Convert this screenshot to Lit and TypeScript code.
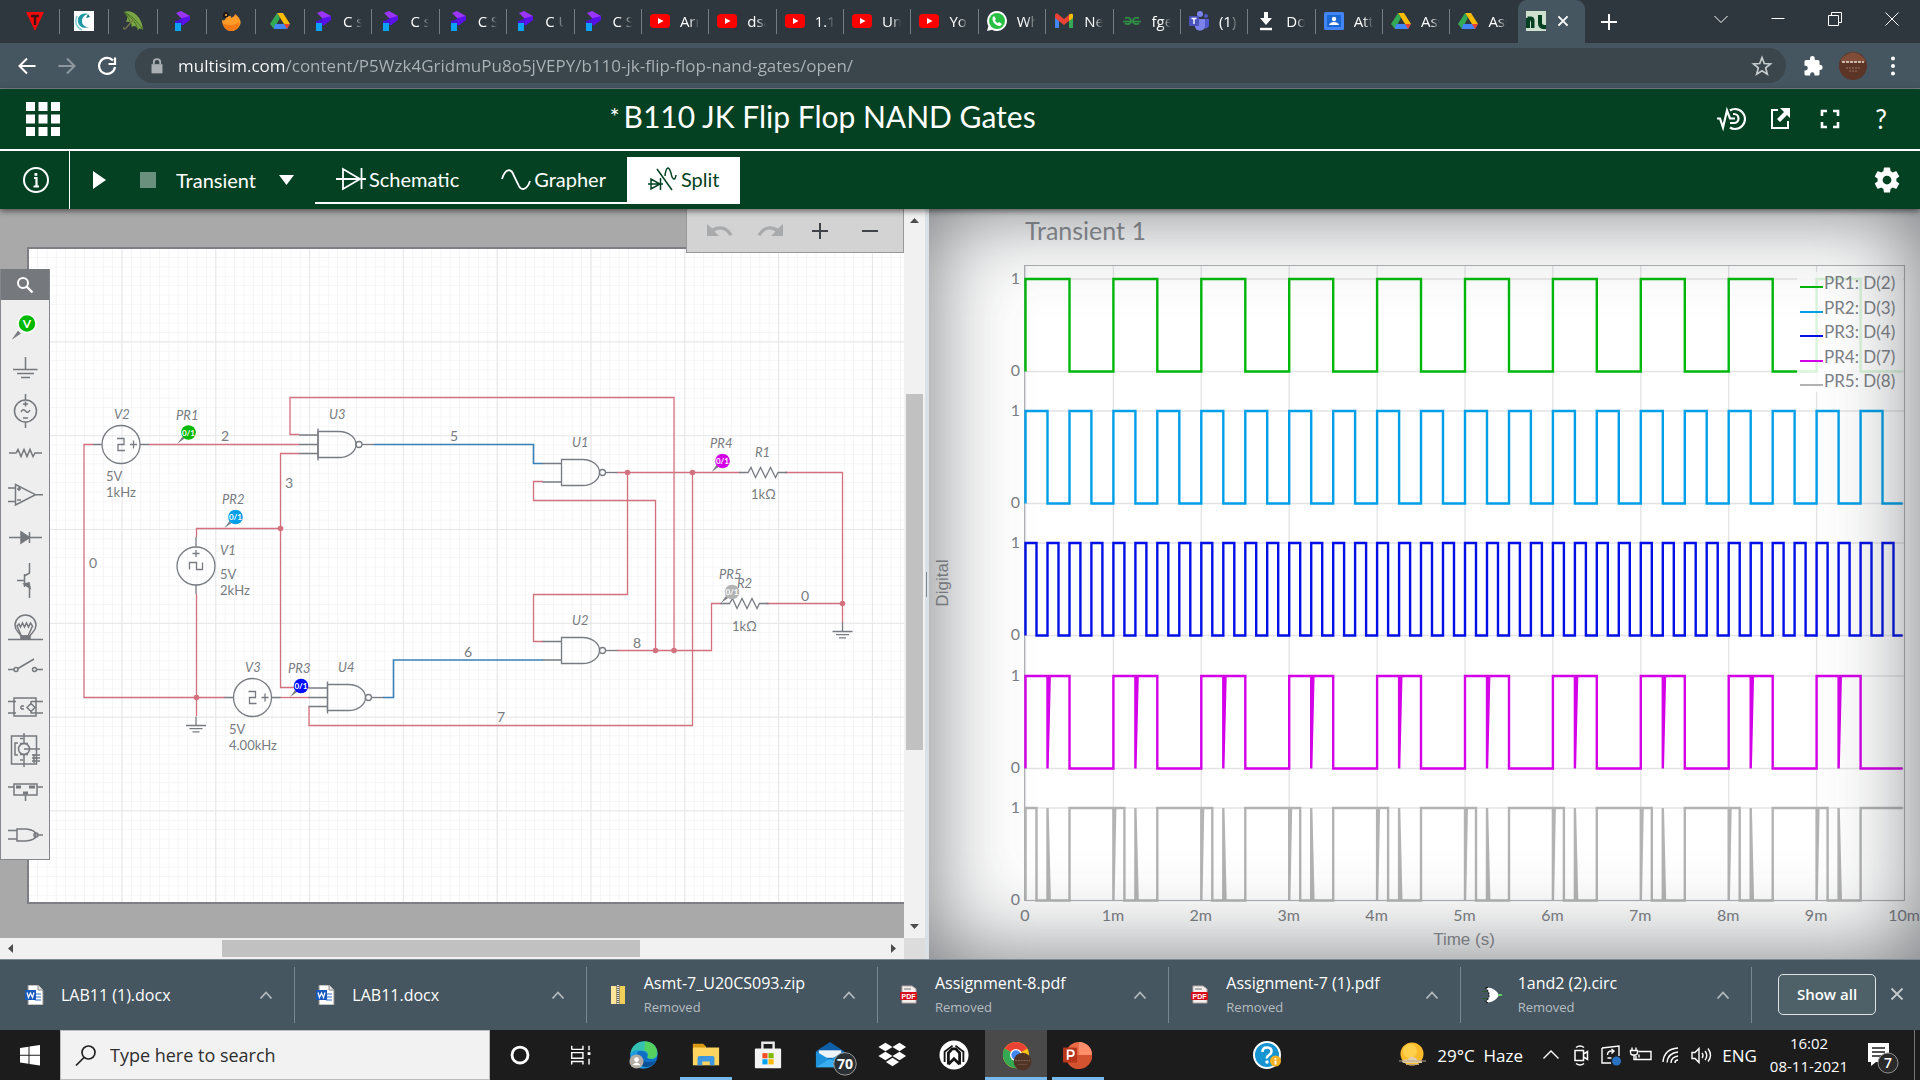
import { LitElement, html, svg, css, nothing } from "lit";
import { customElement } from "lit/decorators.js";

/* ---------- favicons (20 x 20) ---------- */
const fav: Record<string, unknown> = {
  tricon: svg`<path d="M1 1H19L10 20Z" fill="#f50a0a"/><path d="M6 5H14M10 5V14" stroke="#3a1414" stroke-width="2.4" fill="none"/>`,
  cswirl: svg`<rect width="20" height="20" fill="#fff"/><path d="M14 3C7 1 3 6 4 11c1 5 6 7 11 5c-4 0-7-2-7-6c0-3 2-6 6-7Z" fill="#1f9aa5"/><path d="M3 5c-3 6 0 12 5 14" stroke="#8ccdd2" stroke-width="1.6" fill="none"/><path d="M14 3l2 3l-4 1Z" fill="#137782"/>`,
  umbrella: svg`<path d="M1 1C9-2 19 5 20 19c-2-2-4-2-5 0c-1-4-4-5-6-3c0-4-3-6-6-5c2-4 2-7-2-10Z" fill="#7ba544"/><path d="M1 1c5 4 12 9 14 18M1 1c7 3 13 9 19 18M1 1c4 5 7 10 8 15" stroke="#48702a" stroke-width="1" fill="none"/><path d="M10 9L3 17c-1 2-3 1-2-1" stroke="#7a7a4c" stroke-width="1.2" fill="none"/>`,
  pflag: svg`<path d="M4 2l5-2l9 5v3l-7 1Z" fill="#9b35fb"/><path d="M18 5v4l-8 6v-3H3l7-5Z" fill="#5a10e8"/><path d="M3 10l7-2v6H3Z" fill="#4a14d8"/><path d="M3 12h6v8H3Z" fill="#0ba1f5"/>`,
  fire: svg`<path d="M1 9c2 1 3 0 4-2c2-3 6-2 5 0c3-1 4-3 4-4c4 3 7 7 5 11c-2 4-5 6-9 6c-5 0-9-5-9-11Z" fill="#ff9b26"/><path d="M2 12c4 3 12 3 16-1c1 5-3 9-8 9c-4 0-7-3-8-8Z" fill="#f47a16"/><path d="M2 3c2-3 5-2 6 0l-1 3l-5 1Z" fill="#1d1715"/><circle cx="5" cy="4" r="1" fill="#ffb84a"/>`,
  drive: svg`<path d="M7 2h6l7 11h-6Z" fill="#fbbc04"/><path d="M7 2l3 5L4 18l-4-5Z" fill="#34a853"/><path d="M5 13h15l-3 5H4Z" fill="#4285f4"/><path d="M14 13h6l-3 5Z" fill="#ea4335"/><path d="M10 7l3 6H7Z" fill="#2d373d"/>`,
  youtube: svg`<rect y="3" width="20" height="14" rx="3.5" fill="#f00"/><path d="M8 7v6l5.500-3Z" fill="#fff"/>`,
  whatsapp: svg`<path d="M10 0a10 10 0 1 1-5 18.700L0 20l1.400-5A10 10 0 0 1 10 0Z" fill="#fff"/><circle cx="10" cy="10" r="8" fill="#27c043"/><path d="M7 5c-3 2-1 6 1 8s6 3 7 0l-3-2l-1 1c-1 0-3-2-3-3l1-1Z" fill="#fff"/>`,
  gmail: svg`<path d="M1 4v13h4V9Z" fill="#4285f4"/><path d="M15 9v8h4V4Z" fill="#34a853"/><path d="M1 4c0-1 2-2 3-1l6 5l6-5v6l-6 5l-9-7Z" fill="#ea4335"/><path d="M15 4c2-2 4-1 4 0v3l-4 3Z" fill="#fbbc04"/>`,
  gfg: svg`<path d="M1 10.500h18" stroke="#2f8d46" stroke-width="1.600"/><path d="M3 7.500c3-2 6 0 6 2.500c0 3-4 4-6 2M17 7.500c-3-2-6 0-6 2.500c0 3 4 4 6 2" stroke="#2f8d46" stroke-width="1.800" fill="none"/>`,
  teams: svg`<circle cx="11" cy="3" r="3" fill="#7b83eb"/><circle cx="17" cy="5" r="2" fill="#5059c9"/><path d="M14 8h6v6c0 3-3 4-5 3Z" fill="#5059c9"/><path d="M6 8h10v7c0 6-9 6-10 1Z" fill="#7b83eb"/><rect y="5" width="10" height="10" rx="1" fill="#4b53bc"/><path d="M2.500 7.500h5M5 7.500v5.500" stroke="#fff" stroke-width="1.400"/>`,
  download: svg`<path d="M8 1h4v6h4l-6 7l-6-7h4Z" fill="#fff"/><path d="M4 18h12" stroke="#fff" stroke-width="2.400"/>`,
  classroom: svg`<rect y="1" width="20" height="18" rx="1.500" fill="#4285f4"/><rect x="3" y="4" width="14" height="12" fill="#1a67d2"/><circle cx="10" cy="8" r="2.200" fill="#fff"/><path d="M5 14c1-4 9-4 10 0Z" fill="#fff"/>`,
  ni: svg`<rect width="20" height="20" fill="#cfe0cf"/><path d="M0 17V7h4v10M1.500 17V5.500h3q4 0 4 4V17H5V9M12 4h4v8q0 2 4 2v4q-8 1-8-6Z" fill="#044123"/>`,
};

/* ---------- tabs ---------- */
type Tab = [string, string];
const pinned = ["tricon", "cswirl", "umbrella", "pflag", "fire", "drive"];
const tabs: Tab[] = [
  ["pflag", "C stack"], ["pflag", "C strings"], ["pflag", "C Stru"], ["pflag", "C Unio"], ["pflag", "C Stor"],
  ["youtube", "Array"], ["youtube", "dsa list"], ["youtube", "1.1 Int"], ["youtube", "Unit 1"], ["youtube", "YouTube"],
  ["whatsapp", "WhatsApp"], ["gmail", "New mail"], ["gfg", "fgets"], ["teams", "(1) Te"],
  ["download", "Down"], ["classroom", "Attend"], ["drive", "Assign"], ["drive", "Assign"],
];

/* ---------- schematic geometry ---------- */
const PINK = "#d4717f", BLUE = "#3a80b8", INK = "#787c82";
const pinkWires = [
  "M93 444.500H84V697.500H225", "M149 444.500H299", "M299 434.500H290V397.500H674V650.500",
  "M299 453.500H280.500V687.500H309", "M280.500 528.500H196.500V537", "M196.500 594V716", "M280 697.500H309",
  "M309 706.500V725.500H692.500V472.500", "M617 472.500H740", "M543 481.500H533.500V500.500H655.500V650.500",
  "M627.500 472.500V594.500H533.500V641.500H543", "M617 650.500H711.500V603.500H722", "M766 603.500H842.500", "M785 472.500H842.500V623",
];
const blueWires = ["M374 444.500H533.500V463.500H543", "M383 697.500H393.500V660H543"];
const junctions = [[280.5, 528.5], [196.5, 697.5], [627.5, 472.5], [692.5, 472.5], [655.5, 650.5], [674, 650.5], [842.5, 603.5]];
const names: [number, number, string][] = [
  [114, 419, "V2"], [176, 420, "PR1"], [329, 419, "U3"], [222, 504, "PR2"], [220, 555, "V1"], [245, 672, "V3"], [288, 673, "PR3"],
  [338, 672, "U4"], [572, 447, "U1"], [710, 448, "PR4"], [755, 457, "R1"], [719, 579, "PR5"], [737, 588, "R2"], [572, 625, "U2"],
];
const values: [number, number, string][] = [
  [106, 481, "5V"], [106, 497, "1kHz"], [220, 579, "5V"], [220, 595, "2kHz"], [229, 734, "5V"], [229, 750, "4.00kHz"], [751, 499, "1kΩ"], [732, 631, "1kΩ"],
];
const nets: [number, number, string][] = [
  [221, 441, "2"], [450, 441, "5"], [285, 488, "3"], [89, 568, "0"], [464, 657, "6"], [497, 722, "7"], [633, 648, "8"], [801, 601, "0"],
];
const probes: [number, number, string][] = [
  [188.5, 432.5, "#00b900"], [235.500, 517, "#009fe8"], [301, 686, "#000dff"], [722.500, 461, "#d400e8"], [732, 592, "#b3b3b3"],
];

const gate = (x: number, y: number, three: boolean) => svg`
  <path d=${`M${x} ${y - 13}h21a17 13 0 0 1 0 26h-21Z`}/>
  ${three
    ? svg`<path d=${`M${x} ${y - 16}v32M${x - 19} ${y - 9.5}h19M${x - 19} ${y}h19M${x - 19} ${y + 9}h19`}/>`
    : svg`<path d=${`M${x - 19} ${y - 9}h19M${x - 19} ${y + 9.5}h19`}/>`}
  <circle cx=${x + 41} cy=${y} r="3"/><path d=${`M${x + 44} ${y}h12`}/>`;
const resistor = (x: number, y: number) => svg`<path d=${`M${x - 10} ${y}h9l3 -5l4.500 10l5 -10l5 10l5 -10l5 10l2.500 -5h9`}/>`;
const ground = (x: number, y: number) => svg`<path d=${`M${x} ${y - 9}v9M${x - 10} ${y}h20M${x - 6.5} ${y + 3.2}h13M${x - 3.5} ${y + 6.400}h7`}/>`;

/* ---------- waveform geometry ---------- */
const X0 = 1025, MS = 87.9;
const rowTop = (i: number) => 279 + Math.round(132.2 * i);
const rowBase = (i: number) => 371 + Math.round(132.2 * i);
const trace = (row: number, pts: [number, number][]) =>
  "M" + pts.map(([t, v]) => `${(X0 + 0.5 + t * MS).toFixed(1)} ${v ? rowTop(row) : rowBase(row) + 0.5}`).join("L");
const square = (period: number): [number, number][] => {
  const p: [number, number][] = [];
  for (let t = 0; t < 9.97; t += period) p.push([t, 0], [t, 1], [Math.min(t + period / 2, 9.97), 1], [Math.min(t + period / 2, 9.97), 0]);
  p.push([9.98, 0]);
  return p;
};
const jkOut: [number, number][] = [];
const jkInv: [number, number][] = [[0, 0], [0, 1]];
for (let n = 0; n < 10; n++) {
  jkOut.push([n, 0], [n, 1], [n + 0.25, 1], [n + 0.25, 0], [n + 0.275, 1], [n + 0.5, 1], [n + 0.5, 0]);
  if (n) jkInv.push([n, 1], [n, 0], [n + 0.02, 1]);
  jkInv.push([n + 0.125, 1], [n + 0.125, 0], [n + 0.25, 0], [n + 0.25, 1], [n + 0.275, 0], [n + 0.5, 0], [n + 0.5, 1]);
}
jkOut.push([9.98, 0]);
jkInv.push([9.98, 1]);
const signals: { name: string; color: string; pts: [number, number][] }[] = [
  { name: "PR1: D(2)", color: "#00b80c", pts: square(1) },
  { name: "PR2: D(3)", color: "#009fe8", pts: square(0.5) },
  { name: "PR3: D(4)", color: "#0010e6", pts: square(0.25) },
  { name: "PR4: D(7)", color: "#d400e8", pts: jkOut },
  { name: "PR5: D(8)", color: "#b3b3b3", pts: jkInv },
];

/* ---------- component palette (50 x 43 cells) ---------- */
const palette: [string, unknown][] = [
  ["Analysis and annotation", svg`<path d="M12.500 39l5.500-8l2.500 2.500Z" fill="#75787d" stroke-width=".5"/><circle cx="27" cy="23.500" r="9" fill="#00b900" stroke="#fff"/><text x="27" y="27.500" text-anchor="middle" class="probe-letter">V</text>`],
  ["Schematic connectors", svg`<path d="M25.500 14v12M13 26.500h24.500M17 30.500h17M21 34.500h9"/>`],
  ["Sources", svg`<circle cx="25.500" cy="25" r="11"/><path d="M25.500 8v6M25.500 36v6M23 18h5M25.500 15.500v5M23 32h5M21 26q2.200-4 4.500-1t4.500-1"/>`],
  ["Passive", svg`<path d="M9 24h7l2-3.500l3 7l3-7l3 7l3-7l3 7l2-3.500h7"/>`],
  ["Analog", svg`<path d="M15.500 12.500v20.500l20-10.300ZM8 16h7.500M8 29.500h7.500M35.500 22.700H43M17 17h4M19 15v4M17 28h4"/>`],
  ["Diodes", svg`<path d="M9 22.500h33M29.500 17v11"/><path d="M21 17v11l8.500-5.500Z" fill="#75787d"/>`],
  ["Transistors", svg`<path d="M29.500 5v10l-5 3M17 22.500h7.500M24.500 16v13M24.500 26l5 3v11"/><path d="M24 26l5-1l1 5Z" fill="#75787d"/>`],
  ["Indicators", svg`<path d="M8 38.500h35"/><path d="M21 35C19 31 15 30 15 24a10.500 10 0 0 1 21 0c0 6-4 7-6 11Z"/><path d="M21 34L17 25l2-2l1.500 3l2-4l2 4l2-4l2 4l2-4l2 3l-4 9"/><path d="M21 35h9v3h-9Z" fill="#75787d"/>`],
  ["Switches", svg`<path d="M8 25.500h6M37 25.500h6M18 24.500L34 15"/><circle cx="16" cy="25.500" r="2"/><circle cx="34.500" cy="25.500" r="2"/>`],
  ["Modeling blocks", svg`<rect x="14" y="11" width="22" height="18"/><path d="M8 14.500h8M8 26h8M31 14.500h12M31 26h12M31 14v3M31 24v2.500M31 16.500l4 4l-4 4l-4-4ZM21 19v3M21 19h3M21 22h3"/>`],
  ["Electromechanical", svg`<rect x="11.500" y="6" width="25" height="28"/><circle cx="24" cy="19" r="5.500"/><path d="M24 3v10M24 25v12M20 13.500h8M20 24.500h8M24 19h16M18 13h-3v12h3M32 25h8M32 28h8M32 31h8M34 24v9M20 8.500h3M20 30h3"/>`],
  ["Power", svg`<rect x="14" y="11" width="23" height="11"/><path d="M8 14h6M37 14h6M25.500 22v6"/><path d="M16 14h5M29 14h6M23 20h5" stroke-width="3"/>`],
  ["Digital", svg`<path d="M17 13h9q10 1 10 6q0 5-10 6h-9ZM8 14.500h9M8 23h9M38 19h5"/><circle cx="36" cy="19" r="2"/>`],
];

/* ---------- taskbar and shelf icons ---------- */
const word = svg`<path d="M3 0h10l5 5v15H3Z" fill="#fff" stroke="#8a8a8a"/><path d="M13 0v5h5" fill="#e4e4e4" stroke="#8a8a8a"/><path d="M10 9h6M10 12h6M10 15h6" stroke="#2b6fd0"/><rect y="5" width="11" height="10" fill="#185abd"/><path d="M2 7.500l1.500 5l2-4.500l2 4.500l1.500-5" stroke="#fff" fill="none" stroke-width="1.200"/>`;
const zip = svg`<path d="M3 1h14v18H3Z" fill="#f2cf58"/><path d="M3 1h5v18H3Z" fill="#ffe69a"/><path d="M10 0v19" stroke="#666" stroke-width="3"/><path d="M10 0v19" stroke="#e6e6e6" stroke-width="2" stroke-dasharray="1 1"/>`;
const pdf = svg`<path d="M3 1h10l4 3v14H3Z" fill="#f4f0f0" stroke="#b9a9a9"/><path d="M5 4h7" stroke="#777"/><rect x="1" y="7" width="17" height="8" rx="1" fill="#d80f1b"/><text x="9.500" y="13.500" text-anchor="middle" class="pdf-word">PDF</text>`;
const circ = svg`<path d="M3 2.500h3q8 1 11 7.500q-3 6.500-11 7.500H3q8-7.500 0-15Z" fill="#fff"/><path d="M3 2.500q8 7.500 0 15M6 2.500h-3M6 17.500H3" stroke="#15191b" stroke-width="1.200" stroke-dasharray="2 1" fill="none"/><path d="M0 6.500h5M0 13.500h5" stroke="#2c5a2c"/><path d="M16.500 10h3.500" stroke="#5bd45b" stroke-width="2"/>`;
const downloads: [unknown, string, string][] = [
  [word, "LAB11 (1).docx", ""], [word, "LAB11.docx", ""], [zip, "Asmt-7_U20CS093.zip", "Removed"],
  [pdf, "Assignment-8.pdf", "Removed"], [pdf, "Assignment-7 (1).pdf", "Removed"], [circ, "1and2 (2).circ", "Removed"],
];

const apps: [string, unknown, string][] = [
  ["Cortana", svg`<circle cx="16" cy="16" r="8.500" fill="none" stroke="#fff" stroke-width="3"/>`, ""],
  ["Task View", svg`<path d="M5 10V6M5 10h12V6M5 26v-3h12v3M5 13.500h12v6H5ZM23.500 6v5M23.500 20v6" fill="none" stroke="#fff" stroke-width="1.500"/><rect x="22" y="13" width="3" height="3" fill="#fff"/>`, ""],
  ["Microsoft Edge", svg`<circle cx="16" cy="16" r="14.500" fill="#0f6fc6"/><path d="M1.500 15C3-3 30-3 30.500 14c0 6-7 8-11 5c3-6-6-10-12-6q-4 2-6 2Z" fill="#35c1b1"/><path d="M17 1.500C30 2 32 14 28 18c-3 2-6 2-8.500 1q3-7-3-8Z" fill="#55d160"/><path d="M1.500 15q3-5 9-4c-6 8 0 19 14 16C12 36 0 26 1.500 15Z" fill="#1b9de2"/><path d="M13 17c0 6 8 9 15 5c-3 7-12 9-16 4Z" fill="#0b4f94"/><circle cx="8" cy="23" r="7.500" fill="#b3aca5"/><circle cx="8" cy="21" r="2.500" fill="#fff"/><path d="M3.500 27q4.500-6 9 0Z" fill="#fff"/>`, ""],
  ["File Explorer", svg`<path d="M2 4h11l3 3v7H2Z" fill="#d89a12"/><path d="M2 8h28v19H2Z" fill="#ffd560"/><path d="M7 27v-8q0-2 2-2h14q2 0 2 2v8h-5v-4h-8v4Z" fill="#3d98e0"/>`, "open"],
  ["Microsoft Store", svg`<path d="M10 10V3h12v7" fill="none" stroke="#e8e8e8" stroke-width="2.600"/><rect x="2" y="9" width="28" height="21" rx="1" fill="#f4f4f4"/><path d="M10 14h5.500v5.500H10Z" fill="#f25022"/><path d="M16.500 14H22v5.500h-5.500Z" fill="#7fba00"/><path d="M10 20.500h5.500V26H10Z" fill="#00a4ef"/><path d="M16.500 20.500H22V26h-5.500Z" fill="#ffb900"/>`, ""],
  ["Mail", svg`<path d="M1 12L16 2l15 10v16H1Z" fill="#0f5fa8"/><path d="M4 11h24v8H4Z" fill="#eef4fa"/><path d="M1 12l15 9l15-9v17H1Z" fill="#1e93dc"/><path d="M1 29l15-9l15 9Z" fill="#39aef0"/><circle cx="32" cy="25.500" r="12" fill="#2a2f33" stroke="#a0a0a0"/><text x="32" y="31" text-anchor="middle" class="badge-count">70</text>`, ""],
  ["Dropbox", svg`<path d="M9 3l7.500 4.500L9 12L1.500 7.500ZM24 3l7 4.500l-7 4.500l-7.500-4.500ZM9 12.500l7.500 4.500L9 21.500L1.500 17ZM24 12.500l7 4.500l-7 4.500l-7.500-4.500ZM16.500 19l7 4.500l-7 4.500l-7-4.500Z" fill="#fff"/>`, ""],
  ["Nod", svg`<circle cx="16" cy="16" r="15.500" fill="#fff"/><path d="M6 23.500V12.500L14.500 6M26 23.500V12.500L17.500 6" fill="none" stroke="#151515" stroke-width="2"/><path d="M10 26V14l4-4.500h4l4 4.500v12M10 26l6-6l6 6" fill="none" stroke="#151515" stroke-width="3"/>`, ""],
  ["Google Chrome", svg`<circle cx="16" cy="16" r="14" fill="#fbc116"/><path d="M16 16L3.900 9A14 14 0 0 1 28.100 9Z" fill="#ea4335"/><path d="M16 16L16 30A14 14 0 0 1 3.900 9Z" fill="#34a853"/><circle cx="16" cy="16" r="6.500" fill="#fff"/><circle cx="16" cy="16" r="5" fill="#4285f4"/><circle cx="23" cy="23" r="9.500" fill="#4f3324"/><path d="M15 22h16" stroke="#8f7565" stroke-dasharray="2 1"/><path d="M18 26h10" stroke="#6f5040"/>`, "active"],
  ["PowerPoint", svg`<circle cx="17" cy="16" r="14" fill="#ed6c47"/><path d="M17 2a14 14 0 0 1 14 14H17Z" fill="#ff8f6b"/><path d="M3 18a14 14 0 0 0 28-2H17Z" fill="#d35230"/><rect y="8" width="15" height="16" rx="1" fill="#b8371b"/><path d="M5 21V11h3.500q3 0 3 3t-3 3H5" fill="none" stroke="#fff" stroke-width="2"/>`, "open"],
];

const line = (d: string, w = 1.5, cls = "ic") => html`<svg class=${cls} viewBox="0 0 24 24"><path d=${d} fill="none" stroke="currentColor" stroke-width=${w}/></svg>`;
const fill = (d: string) => html`<svg class="ic" viewBox="0 0 24 24"><path d=${d} fill="currentColor"/></svg>`;

const shared = css`
  :host, * { box-sizing: border-box; }
  button { border: 0; padding: 0; margin: 0; background: none; color: inherit; font: inherit; display: flex; align-items: center; justify-content: center; }
  svg { display: block; flex: none; }
  .ic { width: 24px; height: 24px; }
`;

@customElement("browser-chrome")
class BrowserChrome extends LitElement {
  static styles = [shared, css`
    :host { display: block; color: #fff; font-family: "Open Sans", "Noto Sans", sans-serif; background: #455660; border-bottom: 1px solid #78858c; }
    .strip { display: flex; height: 43px; background: #2d373d; padding-left: 11px; }
    .tabs { display: flex; flex: 1; min-width: 0; }
    .tab { position: relative; display: flex; align-items: center; gap: 10px; flex: 1; min-width: 0; padding: 0 0 2px 8px; font-size: 15px; color: #fff; text-decoration: none; }
    .tab::after { content: ""; position: absolute; right: 0; top: 9px; width: 1px; height: 25px; background: #737d83; }
    .tab.pin { flex: 0 0 49px; padding-left: 14px; }
    .fav { width: 20px; height: 20px; }
    .label { width: 19px; overflow: hidden; white-space: nowrap; -webkit-mask-image: linear-gradient(90deg, #000 50%, transparent); mask-image: linear-gradient(90deg, #000 50%, transparent); }
    .tab.current { background: #455660; border-radius: 9px 9px 0 0; gap: 6px; }
    .tab.current::after, .tab.last::after { display: none; }
    .close { width: 22px; height: 22px; }
    .plus { width: 48px; margin-right: 59px; }
    .win { width: 57px; height: 37px; }
    .bar { display: flex; align-items: center; height: 45px; padding: 0 7px; }
    .nav { width: 40px; height: 43px; }
    .nav.dim { color: #8d979d; }
    .omni { display: flex; align-items: center; flex: 1; height: 35px; margin: 0 7px 0 8px; border-radius: 18px; background: #3a454c; padding: 0 12px 0 11px; }
    .omni .lock { width: 22px; height: 22px; color: #aab0b4; }
    .url { flex: 1; min-width: 0; margin-left: 10px; border: 0; outline: 0; padding: 0; font: 17px "Open Sans", "Noto Sans", sans-serif; color: transparent; background: linear-gradient(90deg, #fff 106px, #adb4b8 106px); -webkit-background-clip: text; background-clip: text; }
    .star { color: #c6cbce; }
    .gap { width: 40px; }
    .me { width: 28px; height: 28px; }
  `];
  render() {
    return html`
      <div class="strip">
        <nav class="tabs" aria-label="Tabs">
          ${pinned.map((k) => html`<a class="tab pin" href="#" aria-label=${k}><svg class="fav" viewBox="0 0 20 20">${fav[k]}</svg></a>`)}
          ${tabs.map(([k, t], i) => html`<a class="tab ${i === tabs.length - 1 ? "last" : ""}" href="#"><svg class="fav" viewBox="0 0 20 20">${fav[k]}</svg><span class="label">${t}</span></a>`)}
          <a class="tab current" href="#" aria-label="Multisim"><svg class="fav" viewBox="0 0 20 20">${fav.ni}</svg><svg class="close" viewBox="0 0 24 24"><path d="M7 7l10 10M17 7L7 17" stroke="#fff" stroke-width="2"/></svg></a>
        </nav>
        <button class="plus" aria-label="New tab">${line("M12 4v16M4 12h16", 2)}</button>
        <button class="win" aria-label="Search tabs">${line("M5.500 9l6.500 6.500L18.500 9", 1)}</button>
        <button class="win" aria-label="Minimize">${line("M5.500 11.500h13", 1)}</button>
        <button class="win" aria-label="Restore">${line("M5.500 8.500h10v10h-10ZM8.500 8.500v-3h10v10h-3", 1)}</button>
        <button class="win" aria-label="Close">${line("M5.500 5.500l13 13M18.500 5.500L5.500 18.500", 1)}</button>
      </div>
      <div class="bar">
        <button class="nav" aria-label="Back">${line("M20.500 12H5M12 4.500L4.500 12L12 19.500", 2)}</button>
        <button class="nav dim" aria-label="Forward">${line("M3.500 12H19M12 4.500L19.500 12L12 19.500", 2)}</button>
        <button class="nav" aria-label="Reload">${line("M18 6.500A8 8 0 1 0 20 13M20 3.500V10H13.500", 2.2)}</button>
        <label class="omni">
          <svg class="lock" viewBox="0 0 24 24"><path d="M6 10h12v10H6Z" fill="currentColor"/><path d="M8.500 10V7.500q0-3 3.500-3t3.500 3V10" fill="none" stroke="currentColor" stroke-width="2"/></svg>
          <input class="url" aria-label="Address" value="multisim.com/content/P5Wzk4GridmuPu8o5jVEPY/b110-jk-flip-flop-nand-gates/open/" />
          <span class="star">${line("M12 3.500l2.300 6l6.200.4l-4.800 4l1.600 6.300L12 16.800L6.700 20.200L8.300 13.900l-4.800-4l6.200-.4Z", 1.7)}</span>
        </label>
        <button class="gap" aria-label="Extensions">${fill("M9 4.500a2.400 2.400 0 0 1 4.800 0V6H17q1.500 0 1.500 1.500v3.200H19a2.600 2.600 0 0 1 0 5.200h-.5v4q0 1.500-1.500 1.500h-3.500v-1a2.200 2.200 0 0 0-4.400 0v1H5q-1.500 0-1.500-1.500v-3.500h1a2.300 2.300 0 0 0 0-4.600h-1V7.500Q3.500 6 5 6h4Z")}</button>
        <button class="gap" aria-label="Profile"><svg class="me" viewBox="0 0 28 28"><circle cx="14" cy="14" r="14" fill="#5c3527"/><path d="M2 7Q14-6 26 7V10H2Z" fill="#7f4d38"/><path d="M3 10h22" stroke="#ccb7ab" stroke-width="2" stroke-dasharray="3 1"/><path d="M7 16h14M10 19h8" stroke="#9b7565" stroke-dasharray="2 1"/></svg></button>
        <button class="gap" aria-label="Menu">${fill("M10 4.500a2 2 0 1 0 4 0a2 2 0 1 0-4 0M10 12a2 2 0 1 0 4 0a2 2 0 1 0-4 0M10 19.500a2 2 0 1 0 4 0a2 2 0 1 0-4 0")}</button>
      </div>`;
  }
}

@customElement("sim-header")
class SimHeader extends LitElement {
  static styles = [shared, css`
    :host { display: block; position: relative; z-index: 2; background: #044123; color: #fff; font-family: Lato, "Open Sans", sans-serif; box-shadow: 0 2px 6px rgba(0, 0, 0, .55); }
    .top { display: flex; align-items: center; height: 60px; padding: 0 14px 0 26px; }
    .apps { width: 34px; height: 34px; }
    .before { flex: 554; }
    .after { flex: 676; }
    .title { display: flex; gap: 4px; margin: 0; padding-bottom: 6px; font-size: 30px; line-height: 40px; font-weight: 400; white-space: nowrap; }
    .star { font-size: 24px; }
    .act { width: 50px; height: 50px; }
    .help { font-size: 26px; }
    .tools { display: flex; align-items: center; height: 60px; border-top: 2px solid #fff; font-size: 20px; }
    .info { width: 70px; height: 58px; padding-left: 2px; border-right: 1px solid #fff; }
    .i30 { width: 30px; height: 30px; }
    .play { width: 28px; height: 40px; margin-left: 15px; }
    .stop { width: 28px; height: 40px; margin-left: 21px; }
    .mode { display: flex; align-items: center; margin: 0 21px 0 14px; width: 118px; }
    .mode select { appearance: none; border: 0; background: none; color: #fff; font: 20px Lato, sans-serif; padding: 0; width: 103px; outline: 0; }
    .arrow { width: 15px; height: 10px; }
    .views { display: flex; height: 47px; }
    .view { gap: 3px; padding: 0 21px; border-bottom: 2px solid #fff; }
    .view.on { background: #fff; color: #044123; }
    .grow { flex: 1; }
    .gear { width: 66px; height: 50px; }
  `];
  render() {
    return html`
      <div class="top">
        <button class="apps" aria-label="Apps"><svg class="apps" viewBox="0 0 34 34">${[0, 12.5, 25].map((y) => [0, 12.5, 25].map((x) => svg`<rect x=${x} y=${y} width="9" height="9" fill="#fff"/>`))}</svg></button>
        <span class="before"></span>
        <h1 class="title"><span class="star">*</span><span>B110 JK Flip Flop NAND Gates</span></h1>
        <span class="after"></span>
        <button class="act" aria-label="Interactive"><svg class="i30" viewBox="0 0 30 30"><g fill="none" stroke="#fff" stroke-width="2.200"><path d="M1 14.500h3l3 9l4-17l3 8h5"/><path d="M14 19h4a4.500 4.500 0 0 0 0-9h-1M14 6.500q2-1.500 5-1.500a10 10 0 0 1 0 20q-3 0-5-1.500" stroke-width="2.200"/></g></svg></button>
        <button class="act" aria-label="Export"><svg class="i30" viewBox="0 0 30 30"><path d="M12 6H6v18h16V17" fill="none" stroke="#fff" stroke-width="2"/><path d="M14 4h10v10l-3-3l-7 7l-3-3l7-7Z" fill="#fff"/></svg></button>
        <button class="act" aria-label="Full screen"><svg class="i30" viewBox="0 0 30 30"><path d="M6 12V7h5M17 7h5v5M22 18v5h-5M11 23H6v-5" fill="none" stroke="#fff" stroke-width="2.600"/></svg></button>
        <button class="act help" aria-label="Help">?</button>
      </div>
      <div class="tools">
        <button class="info" aria-label="Info"><svg class="i30" viewBox="0 0 30 30"><circle cx="15" cy="15" r="12" fill="none" stroke="#fff" stroke-width="2"/><path d="M13 13h2.500v8M12.500 21.500h5.500" fill="none" stroke="#fff" stroke-width="2.200"/><rect x="13.500" y="8" width="2.800" height="2.800" fill="#fff"/></svg></button>
        <button class="play" aria-label="Run"><svg class="ic" viewBox="0 0 24 24"><path d="M6 3v18l13-9Z" fill="#fff"/></svg></button>
        <button class="stop" aria-label="Stop"><svg class="ic" viewBox="0 0 24 24"><rect x="4" y="4" width="16" height="16" fill="#68907c"/></svg></button>
        <label class="mode"><select aria-label="Simulation type"><option>Transient</option></select><svg class="arrow" viewBox="0 0 15 10"><path d="M0 0H15L7.500 10Z" fill="#fff"/></svg></label>
        <div class="views">
          <button class="view"><svg class="i30" viewBox="0 0 30 30"><path d="M0 15h30M7 5v20l17-10ZM25.500 4v21" fill="none" stroke="currentColor" stroke-width="1.800"/></svg>Schematic</button>
          <button class="view"><svg class="i30" viewBox="0 0 30 30"><path d="M1 15C4 5 10 3 13 12L17 20C20 28 26 26 29 17" fill="none" stroke="currentColor" stroke-width="1.800"/></svg>Grapher</button>
          <button class="view on"><svg class="i30" viewBox="0 0 30 30"><path d="M0 20h15M3 15v10l9-5ZM12.500 14v12M9 5l15 21M17 12C18 2 21 2 23 9C24 15 27 18 28 11" fill="none" stroke="currentColor" stroke-width="1.500"/></svg>Split</button>
        </div>
        <span class="grow"></span>
        <button class="gear" aria-label="Settings"><svg class="i30" viewBox="0 0 24 24"><path fill="#fff" d="M19.430 12.980c.04-.32.07-.64.07-.98s-.03-.66-.07-.98l2.110-1.650c.19-.15.24-.42.12-.64l-2-3.460c-.12-.22-.39-.3-.61-.22l-2.490 1c-.52-.4-1.080-.73-1.690-.98l-.38-2.650A.49.49 0 0 0 14 2h-4c-.25 0-.46.18-.49.42l-.38 2.650c-.61.25-1.170.59-1.690.98l-2.490-1c-.23-.09-.49 0-.61.22l-2 3.460c-.13.22-.07.49.12.64l2.110 1.650c-.04.32-.07.65-.07.98s.03.66.07.98l-2.110 1.650c-.19.15-.24.42-.12.64l2 3.460c.12.22.39.3.61.22l2.490-1c.52.4 1.080.73 1.690.98l.38 2.650c.03.24.24.42.49.42h4c.25 0 .46-.18.49-.42l.38-2.650c.61-.25 1.170-.59 1.690-.98l2.490 1c.23.09.49 0 .61-.22l2-3.460c.12-.22.07-.49-.12-.64ZM12 15.500a3.500 3.500 0 1 1 0-7a3.500 3.500 0 0 1 0 7Z"/></svg></button>
      </div>`;
  }
}

@customElement("schematic-pane")
class SchematicPane extends LitElement {
  static styles = [shared, css`
    :host { display: grid; grid-template-columns: 1fr 21px; grid-template-rows: 1fr 21px; min-width: 0; font-family: Lato, sans-serif; }
    .canvas { position: relative; overflow: hidden; background: #a9a9a9; }
    .sheet { position: absolute; inset: 0; width: 100%; height: 100%; }
    .name { font-style: italic; font-size: 13px; fill: #787c82; }
    .value { font-size: 13px; fill: #787c82; }
    .net { font-size: 14px; fill: #787c82; }
    .zero { font-size: 8px; font-weight: 700; fill: #fff; }
    .zoom { position: absolute; right: 0; top: 0; display: flex; height: 44px; padding: 0 8px; background: #d3d3d3; border: 1px solid #999; border-top: 0; color: #404347; }
    .zoom button { width: 50px; }
    .zoom .off { color: #a9aaab; }
    .ic30 { width: 30px; height: 30px; }
    .palette { position: absolute; left: 0; top: 60px; width: 50px; background: #eee; border: 1px solid #84878c; border-top: 0; }
    .find { width: 48px; height: 31px; background: #75787d; }
    .palette .cell { width: 48px; height: 43px; }
    .cell svg { width: 50px; height: 43px; fill: none; stroke: #75787d; stroke-width: 1.500; overflow: visible; }
    .probe-letter { font: 700 12px Lato, sans-serif; fill: #fff; stroke: none; }
    .vbar, .hbar { display: flex; align-items: center; justify-content: space-between; background: #f1f1f1; color: #4d4d4d; }
    .vbar { flex-direction: column; }
    .track { flex: 1; display: flex; }
    .vbar .track { flex-direction: column; width: 17px; }
    .hbar .track { height: 17px; }
    .lead-v { flex: 164; } .thumb-v { flex: 356; background: #c1c1c1; } .tail-v { flex: 167; }
    .lead-h { flex: 201; } .thumb-h { flex: 418; background: #c1c1c1; } .tail-h { flex: 243; }
    .arr { width: 21px; height: 21px; }
    .corner { background: #dcdcdc; }
  `];
  render() {
    const arr = (d: string) => html`<button class="arr" aria-label="Scroll"><svg class="arr" viewBox="0 0 21 21"><path d=${d} fill="currentColor"/></svg></button>`;
    return html`
      <div class="canvas">
        <svg class="sheet" viewBox="0 209 904 729" preserveAspectRatio="xMinYMin slice">
          <defs>
            <pattern id="minor" x="27.700" y="247.600" width="9.380" height="9.380" patternUnits="userSpaceOnUse"><path d="M0 0H9.380M0 0V9.380" stroke="#f3f3f4" stroke-width="1.600" fill="none"/></pattern>
            <pattern id="major" x="27.700" y="247.600" width="93.800" height="93.800" patternUnits="userSpaceOnUse"><path d="M0 0H93.800M0 0V93.800" stroke="#e6e6e8" stroke-width="2" fill="none"/></pattern>
          </defs>
          <rect x="28" y="248" width="900" height="655" fill="#fff"/>
          <rect x="28" y="248" width="900" height="655" fill="url(#minor)"/>
          <rect x="28" y="248" width="900" height="655" fill="url(#major)"/>
          <rect x="28" y="248" width="900" height="655" fill="none" stroke="#7d7f84" stroke-width="2"/>
          <g fill="none" stroke-width="1.300">
            ${pinkWires.map((d) => svg`<path d=${d} stroke=${PINK}/>`)}
            ${blueWires.map((d) => svg`<path d=${d} stroke=${BLUE} stroke-width="1.600"/>`)}
          </g>
          ${junctions.map(([x, y]) => svg`<circle cx=${x} cy=${y} r="2.800" fill=${PINK}/>`)}
          <g fill="none" stroke=${INK} stroke-width="1.300">
            ${gate(318, 444.5, true)}${gate(327.5, 697.5, true)}${gate(561.5, 472.5, false)}${gate(561.5, 650.5, false)}
            ${resistor(749, 472.5)}${resistor(730.5, 603.5)}${ground(842.5, 631.5)}${ground(196, 725.5)}
            ${[[121, 444.5], [252.5, 697.5]].map(([x, y]) => svg`<circle cx=${x} cy=${y} r="19"/><path d=${`M${x - 28} ${y}h9M${x + 19} ${y}h9M${x + 9} ${y}h7M${x + 12.5} ${y - 4}v8M${x - 4} ${y - 6}h7v6h-6v6h7`}/>`)}
            <circle cx="196" cy="566" r="19"/><path d="M196 537v10M196 585v9M192.500 553.500h7M196 550v7M189.500 569.500v-7h7v7h6v-7"/>
          </g>
          ${names.map(([x, y, t]) => svg`<text x=${x} y=${y} class="name">${t}</text>`)}
          ${values.map(([x, y, t]) => svg`<text x=${x} y=${y} class="value">${t}</text>`)}
          ${nets.map(([x, y, t]) => svg`<text x=${x} y=${y} class="net">${t}</text>`)}
          ${probes.map(([x, y, c]) => svg`<path d=${`M${x - 11} ${y + 11}l5 -7l2 2Z`} fill=${INK}/><circle cx=${x} cy=${y} r="7.300" fill=${c}/><text x=${x} y=${y + 3} text-anchor="middle" class="zero">0/1</text>`)}
        </svg>
        <div class="zoom">
          <button class="off" aria-label="Undo"><svg class="ic30" viewBox="0 0 30 30"><path d="M2 8v12h12l-4.500-4.500Q18 10 24.500 20l3-1.500Q20 6 7 12.500Z" fill="currentColor"/></svg></button>
          <button class="off" aria-label="Redo"><svg class="ic30" viewBox="0 0 30 30"><path d="M28 8v12H16l4.500-4.500Q12 10 5.500 20l-3-1.500Q10 6 23 12.500Z" fill="currentColor"/></svg></button>
          <button aria-label="Zoom in"><svg class="ic30" viewBox="0 0 30 30"><path d="M15 7v16M7 15h16" stroke="currentColor" stroke-width="2"/></svg></button>
          <button aria-label="Zoom out"><svg class="ic30" viewBox="0 0 30 30"><path d="M7 15h16" stroke="currentColor" stroke-width="2"/></svg></button>
        </div>
        <div class="palette">
          <button class="find" aria-label="Find component"><svg class="ic" viewBox="0 0 24 24"><circle cx="10" cy="10" r="5" fill="none" stroke="#fff" stroke-width="2"/><path d="M13.500 13.500l6 6" stroke="#fff" stroke-width="2.400"/></svg></button>
          ${palette.map(([t, s]) => html`<button class="cell" aria-label=${t}><svg viewBox="0 0 50 43">${s}</svg></button>`)}
        </div>
      </div>
      <div class="vbar">${arr("M6 14L10.500 9L15 14Z")}<div class="track"><span class="lead-v"></span><span class="thumb-v"></span><span class="tail-v"></span></div>${arr("M6 7L10.500 12L15 7Z")}</div>
      <div class="hbar">${arr("M13 6L8 10.500L13 15Z")}<div class="track"><span class="lead-h"></span><span class="thumb-h"></span><span class="tail-h"></span></div>${arr("M8 6L13 10.500L8 15Z")}</div>
      <div class="corner"></div>`;
  }
}

@customElement("grapher-pane")
class GrapherPane extends LitElement {
  static styles = [shared, css`
    :host { display: block; position: relative; min-width: 0; background: #fff; }
    .plot { position: absolute; inset: 0; width: 100%; height: 100%; }
    .shade { position: absolute; inset: 0; pointer-events: none; box-shadow: inset 0 0 90px rgba(54, 58, 64, .7); }
    .tick { font: 16px Lato, sans-serif; fill: #7c7f85; }
    .legend { font: 17px Lato, sans-serif; fill: #7c7f85; }
    .heading { font: 25px Lato, sans-serif; fill: #8b8e93; }
    .axis { font: 17px "Liberation Sans", Arial, sans-serif; fill: #8b8e93; }
  `];
  render() {
    const ticks = Array.from({ length: 11 }, (_, i) => i);
    return html`
      <svg class="plot" viewBox="929 209 991 750" preserveAspectRatio="xMinYMin meet">
        <text x="1025" y="240" class="heading">Transient 1</text>
        <g stroke="#e3e3e6" stroke-width="1.300">
          ${ticks.map((i) => svg`<path d=${`M${X0 + 0.5 + i * MS} 266V901`}/>`)}
          ${signals.map((_, i) => svg`<path d=${`M1025 ${rowTop(i)}H1904M1025 ${rowBase(i) + 0.5}H1904`}/>`)}
        </g>
        <rect x="1024.500" y="265.500" width="880" height="635" fill="none" stroke="#b0b1b4"/>
        <g fill="none" stroke-width="2.400" stroke-linejoin="miter" stroke-miterlimit="2">
          ${signals.map((s, i) => svg`<path d=${trace(i, s.pts)} stroke=${s.color}/>`)}
        </g>
        <rect x="1797" y="272" width="106" height="120" fill="#fff" fill-opacity=".85"/>
        ${signals.map((s, i) => svg`<path d=${`M1800 ${287 + Math.round(24.5 * i)}h23`} stroke=${s.color} stroke-width="2"/><text x="1824" y=${289 + Math.round(24.5 * i)} class="legend">${s.name}</text>
          <text x="1020" y=${rowTop(i) + 5} text-anchor="end" class="tick">1</text><text x="1020" y=${rowBase(i) + 5} text-anchor="end" class="tick">0</text>`)}
        ${ticks.map((i) => svg`<text x=${X0 + i * MS} y="921" text-anchor="middle" class="tick">${i ? i + "m" : "0"}</text>`)}
        <text x="1464" y="945" text-anchor="middle" class="axis">Time (s)</text>
        <text x="0" y="0" transform="translate(948 583) rotate(-90)" text-anchor="middle" class="axis">Digital</text>
      </svg>
      <div class="shade"></div>`;
  }
}

@customElement("download-shelf")
class DownloadShelf extends LitElement {
  static styles = [shared, css`
    :host { display: flex; align-items: center; height: 71px; background: #455660; border-top: 1px solid #7e8a92; color: #fff; font-family: "Open Sans", "Noto Sans", sans-serif; padding-left: 4px; }
    .items { display: flex; flex: 1; min-width: 0; }
    .item { display: flex; align-items: center; flex: 1; min-width: 0; height: 56px; padding: 0 16px 0 21px; border-right: 1px solid #7a878e; }
    .file { width: 20px; height: 20px; margin-right: 16px; }
    .pdf-word { font: 700 7px "Liberation Sans", sans-serif; fill: #fff; }
    .text { flex: 1; min-width: 0; }
    .name { font-size: 16px; line-height: 24px; white-space: nowrap; color: #fff; text-decoration: none; display: block; }
    .state { font-size: 13px; line-height: 24px; color: #b6bdc1; }
    .up { color: #b4bbbf; }
    .all { width: 98px; height: 41px; margin: 0 9px 2px 26px; border: 1px solid #dfe3e5; border-radius: 5px; background: #4e6169; font-size: 15px; font-weight: 600; }
    .x { margin: 0 11px 2px 0; color: #c4cacd; }
  `];
  render() {
    return html`
      <div class="items">${downloads.map(([ic, n, s]) => html`<div class="item"><svg class="file" viewBox="0 0 20 20">${ic}</svg><div class="text"><a class="name" href="#">${n}</a>${s ? html`<div class="state">${s}</div>` : nothing}</div><button class="up" aria-label="Options for ${n}">${line("M6.500 15.500L12 9.500l5.500 6", 1.8)}</button></div>`)}</div>
      <button class="all">Show all</button>
      <button class="x" aria-label="Close shelf">${line("M6.500 6.500l11 11M17.500 6.500l-11 11", 1.8)}</button>`;
  }
}

@customElement("task-bar")
class TaskBar extends LitElement {
  static styles = [shared, css`
    :host { display: flex; height: 50px; background: #1c1c1c; color: #fff; font-family: "Open Sans", "Noto Sans", sans-serif; font-size: 17px; }
    .start { width: 60px; }
    .search { display: flex; align-items: center; gap: 10px; width: 430px; background: #f2f2f2; border: 1px solid #bcbcbc; color: #222; padding-left: 11px; }
    .search input { flex: 1; min-width: 0; border: 0; outline: 0; background: none; padding: 0; font: 18px "Open Sans", "Noto Sans", sans-serif; }
    .search input::placeholder { color: #2e2e2e; opacity: 1; }
    .i28 { width: 28px; height: 28px; }
    .apps { display: flex; margin-left: -1px; }
    .app { width: 62px; height: 50px; border-bottom: 3px solid transparent; padding-top: 3px; }
    .app svg { width: 30px; height: 30px; overflow: visible; }
    .app.open { border-image: linear-gradient(90deg, transparent 6px, #76b9ed 6px, #76b9ed 56px, transparent 56px) 1; border-style: solid; border-width: 0 0 3px; }
    .app.active { background: #4a4a4a; border-bottom-color: #76b9ed; }
    .badge-count { font: 700 15px "Open Sans", sans-serif; fill: #fff; }
    .grow { flex: 1; }
    .help { margin-right: 117px; }
    .weather { gap: 11px; margin-right: 13px; }
    .sys { width: 30px; }
    .lang { width: 47px; }
    .clock { flex-direction: column; width: 92px; font-size: 15px; line-height: 23px; white-space: nowrap; margin-right: 8px; }
    .note { width: 36px; margin-right: 15px; }
    .note svg { width: 36px; height: 40px; }
    .edge { width: 6px; border-left: 1px solid #777; }
    .seven { font: 600 14px "Open Sans", sans-serif; fill: #fff; }
  `];
  render() {
    return html`
      <button class="start" aria-label="Start"><svg class="ic" viewBox="0 0 24 24"><path d="M2 5l8.500-1.200v8H2ZM11.500 3.600L22 2v9.800H11.500ZM2 12.800h8.500v8L2 19.600ZM11.500 12.800H22v9.700L11.500 21Z" fill="#fff"/></svg></button>
      <label class="search"><svg class="i28" viewBox="0 0 28 28"><circle cx="16.500" cy="11.500" r="6.500" fill="none" stroke="#222" stroke-width="1.700"/><path d="M12 16.500L4 24.500" stroke="#222" stroke-width="1.700"/></svg><input type="text" aria-label="Search" placeholder="Type here to search" /></label>
      <div class="apps">${apps.map(([n, s, c]) => html`<button class="app ${c}" aria-label=${n}><svg viewBox="0 0 32 32">${s}</svg></button>`)}</div>
      <span class="grow"></span>
      <button class="help" aria-label="Get help"><svg class="i28" viewBox="0 0 28 28"><circle cx="14" cy="14" r="13" fill="#1794d2" stroke="#fff" stroke-width="2"/><path d="M9.500 11q0-4.500 4.500-4.500t4.500 4q0 2-2.500 3.500t-2 3.500" fill="none" stroke="#fff" stroke-width="2.600"/><circle cx="14" cy="21" r="1.700" fill="#fff"/><circle cx="22.500" cy="20" r="5.500" fill="#f4b121"/><path d="M22.500 17v1.500M22.500 19.500v4" stroke="#fff" stroke-width="1.800"/></svg></button>
      <button class="weather"><svg class="i28" viewBox="0 0 28 28"><circle cx="14" cy="13" r="11.500" fill="#fdbb2c"/><circle cx="12" cy="10" r="7" fill="#ffd858" opacity=".7"/><path d="M4 20q3-3 6-1q1-4 5-3q4 1 4 3q6 0 5 3H7Q4 22 4 20Z" fill="#e3cfaa"/><path d="M1 20h27M8 23.500h13" stroke="#b5a58a" stroke-width="1.200"/></svg><span>29°C&nbsp; Haze</span></button>
      <button class="sys" aria-label="Hidden icons">${line("M4.500 15.500L12 8l7.500 7.500", 1.4)}</button>
      <button class="sys" aria-label="Meet now">${line("M6 7.500h8.500v10H6ZM14.500 11l4-2.500v8l-4-2.500M7 4.500q4-3 8 0M7 20.500q4 3 8 0", 1.5)}</button>
      <button class="sys" aria-label="Sync"><svg class="ic" viewBox="0 0 24 24"><path d="M3 5l17-2v10M3 5v15h9M8.500 12q0-4 4-4h2M12.500 6l2.500 2l-2.500 2.500M8.500 15h4" fill="none" stroke="#fff" stroke-width="1.400"/><circle cx="17.500" cy="18" r="4.500" fill="#2a72c3"/></svg></button>
      <button class="sys" aria-label="Battery">${line("M9.500 8.500H22v8H7V13M3 4.500v3M7 4.500v3M1.500 7.500h7v2q0 2-2 2.500h-3q-2-.5-2-2.500ZM5 12v4.500h2M10 11.500v3", 1.4)}</button>
      <button class="sys" aria-label="Wi-Fi">${line("M4 19Q5 6 19 5M8 19.500Q9 10 19 9M12 20q0-6 7-7M16 20q0-3 3-3", 1.4)}</button>
      <button class="sys" aria-label="Volume">${line("M3 9.500h3l4-4v14l-4-4H3ZM13 10q2 2.500 0 5M16 8q3.500 4.500 0 9M19 5.500q5 7 0 13", 1.4)}</button>
      <button class="lang">ENG</button>
      <button class="clock"><span>16:02</span><span>08-11-2021</span></button>
      <button class="note" aria-label="Notifications"><svg viewBox="0 0 36 40"><path d="M5 8h21v19H13l-5 4v-4H5Z" fill="#fff"/><path d="M9 13h13M9 17h13M9 21h10" stroke="#1c1c1c" stroke-width="1.500"/><circle cx="25" cy="28" r="10" fill="#2a2a2a" stroke="#909090"/><text x="25" y="33" text-anchor="middle" class="seven">7</text></svg></button>
      <span class="edge"></span>`;
  }
}

@customElement("app-root")
class AppRoot extends LitElement {
  static styles = css`
    :host { display: flex; flex-direction: column; min-height: 100vh; overflow: hidden; }
    .work { display: grid; grid-template-columns: 925fr 4px 991fr; flex: 1; }
    .split { display: flex; align-items: center; background: #dbe0e4; }
    .grip { width: 1px; height: 25px; margin-left: 1px; background: #84898e; }
  `;
  render() {
    return html`
      <browser-chrome></browser-chrome>
      <sim-header></sim-header>
      <main class="work"><schematic-pane></schematic-pane><div class="split"><span class="grip"></span></div><grapher-pane></grapher-pane></main>
      <download-shelf></download-shelf>
      <task-bar></task-bar>`;
  }
}
